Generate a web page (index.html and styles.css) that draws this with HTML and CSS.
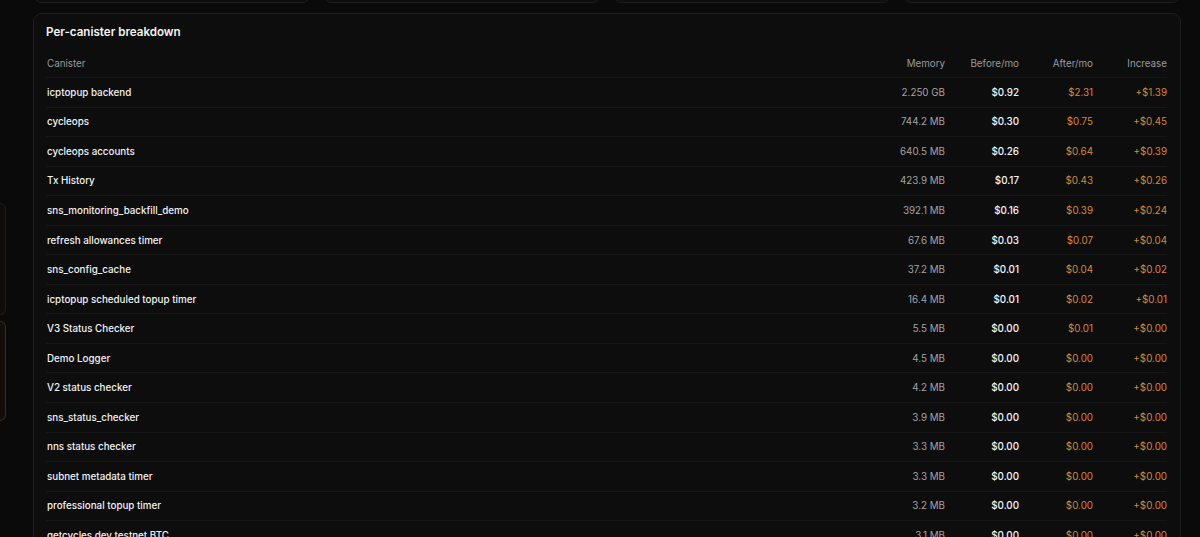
FILE: index.html
```html
<!DOCTYPE html>
<html lang="en">
<head>
<meta charset="utf-8">
<title>Per-canister breakdown</title>
<link rel="stylesheet" href="styles.css">
</head>
<body>
<div class="page">
  <aside class="rail">
    <div class="rail-panel rail-panel-a"></div>
    <div class="rail-panel rail-panel-b"></div>
  </aside>
  <main class="main">
    <div class="stats">
      <div class="stat"></div>
      <div class="stat"></div>
      <div class="stat"></div>
      <div class="stat"></div>
    </div>
    <section class="card">
      <h2 class="card-title">Per-canister breakdown</h2>
      <div class="table">
        <div class="row head">
          <div class="c name">Canister</div>
          <div class="c num">Memory</div>
          <div class="c num">Before/mo</div>
          <div class="c num">After/mo</div>
          <div class="c num">Increase</div>
        </div>
        <div class="row"><div class="c name">icptopup backend</div><div class="c num mem">2.250 GB</div><div class="c num before">$0.92</div><div class="c num after">$2.31</div><div class="c num after">+$1.39</div></div>
        <div class="row"><div class="c name">cycleops</div><div class="c num mem">744.2 MB</div><div class="c num before">$0.30</div><div class="c num after">$0.75</div><div class="c num after">+$0.45</div></div>
        <div class="row"><div class="c name">cycleops accounts</div><div class="c num mem">640.5 MB</div><div class="c num before">$0.26</div><div class="c num after">$0.64</div><div class="c num after">+$0.39</div></div>
        <div class="row"><div class="c name">Tx History</div><div class="c num mem">423.9 MB</div><div class="c num before">$0.17</div><div class="c num after">$0.43</div><div class="c num after">+$0.26</div></div>
        <div class="row"><div class="c name">sns_monitoring_backfill_demo</div><div class="c num mem">392.1 MB</div><div class="c num before">$0.16</div><div class="c num after">$0.39</div><div class="c num after">+$0.24</div></div>
        <div class="row"><div class="c name">refresh allowances timer</div><div class="c num mem">67.6 MB</div><div class="c num before">$0.03</div><div class="c num after">$0.07</div><div class="c num after">+$0.04</div></div>
        <div class="row"><div class="c name">sns_config_cache</div><div class="c num mem">37.2 MB</div><div class="c num before">$0.01</div><div class="c num after">$0.04</div><div class="c num after">+$0.02</div></div>
        <div class="row"><div class="c name">icptopup scheduled topup timer</div><div class="c num mem">16.4 MB</div><div class="c num before">$0.01</div><div class="c num after">$0.02</div><div class="c num after">+$0.01</div></div>
        <div class="row"><div class="c name">V3 Status Checker</div><div class="c num mem">5.5 MB</div><div class="c num before">$0.00</div><div class="c num after">$0.01</div><div class="c num after">+$0.00</div></div>
        <div class="row"><div class="c name">Demo Logger</div><div class="c num mem">4.5 MB</div><div class="c num before">$0.00</div><div class="c num after">$0.00</div><div class="c num after">+$0.00</div></div>
        <div class="row"><div class="c name">V2 status checker</div><div class="c num mem">4.2 MB</div><div class="c num before">$0.00</div><div class="c num after">$0.00</div><div class="c num after">+$0.00</div></div>
        <div class="row"><div class="c name">sns_status_checker</div><div class="c num mem">3.9 MB</div><div class="c num before">$0.00</div><div class="c num after">$0.00</div><div class="c num after">+$0.00</div></div>
        <div class="row"><div class="c name">nns status checker</div><div class="c num mem">3.3 MB</div><div class="c num before">$0.00</div><div class="c num after">$0.00</div><div class="c num after">+$0.00</div></div>
        <div class="row"><div class="c name">subnet metadata timer</div><div class="c num mem">3.3 MB</div><div class="c num before">$0.00</div><div class="c num after">$0.00</div><div class="c num after">+$0.00</div></div>
        <div class="row"><div class="c name">professional topup timer</div><div class="c num mem">3.2 MB</div><div class="c num before">$0.00</div><div class="c num after">$0.00</div><div class="c num after">+$0.00</div></div>
        <div class="row"><div class="c name">getcycles dev testnet BTC</div><div class="c num mem">3.1 MB</div><div class="c num before">$0.00</div><div class="c num after">$0.00</div><div class="c num after">+$0.00</div></div>
      </div>
    </section>
  </main>
</div>
</body>
</html>
```

FILE: styles.css
```css
* { box-sizing: border-box; }
html, body {
  margin: 0;
  padding: 0;
  background: #0a0a0a;
  height: 537px;
  overflow: hidden;
}
body {
  font-family: Inter, "Noto Sans", "Liberation Sans", sans-serif;
  color: #f2f2f2;
  -webkit-font-smoothing: antialiased;
}
.page {
  display: flex;
  width: 1200px;
  height: 537px;
  overflow: hidden;
}
.rail {
  width: 33px;
  flex: none;
  display: flex;
  flex-direction: column;
  gap: 6px;
  padding-top: 203px;
}
.rail-panel {
  width: 6px;
  border: 1px solid #2c2219;
  border-left: none;
  border-radius: 0 7px 7px 0;
  background: #0f0c0a;
}
.rail-panel-a { height: 112px; border-color: #231c16; }
.rail-panel-b { height: 100px; border-color: #3a2a1b; background: #130e09; }
.main {
  width: 1148px;
  flex: none;
}
.stats {
  display: grid;
  grid-template-columns: repeat(4, 1fr);
  gap: 12px;
  height: 60px;
  margin-top: -57px;
}
.stat {
  border: 1px solid #1e1e1e;
  border-radius: 9px;
  background: #0d0d0d;
}
.card {
  margin-top: 10px;
  border: 1px solid #1e1e1e;
  border-radius: 9px;
  background: #0d0d0d;
  padding: 9px 13px 0 12px;
  height: 600px;
}
.card-title {
  margin: 0;
  font-size: 11.6px;
  line-height: 18px;
  font-weight: 600;
  color: #f4f4f4;
}
.table {
  margin-top: 8px;
}
.row {
  display: flex;
  align-items: center;
  height: 29.55px;
  border-bottom: 1px solid #171717;
  font-size: 9.8px;
  font-weight: 500;
}
.row.head {
  height: 29px;
  font-weight: 400;
  color: #9b9b9b;
}
.c.name {
  flex: 1;
  padding-left: 1px;
}
.c.num {
  width: 74px;
  text-align: right;
}
.head .c { color: #9b9b9b; }
.mem { color: #a3a3a3; font-weight: 400; }
.before { color: #f5f5f5; }
.after { color: #d6873d; font-weight: 400; }
```
